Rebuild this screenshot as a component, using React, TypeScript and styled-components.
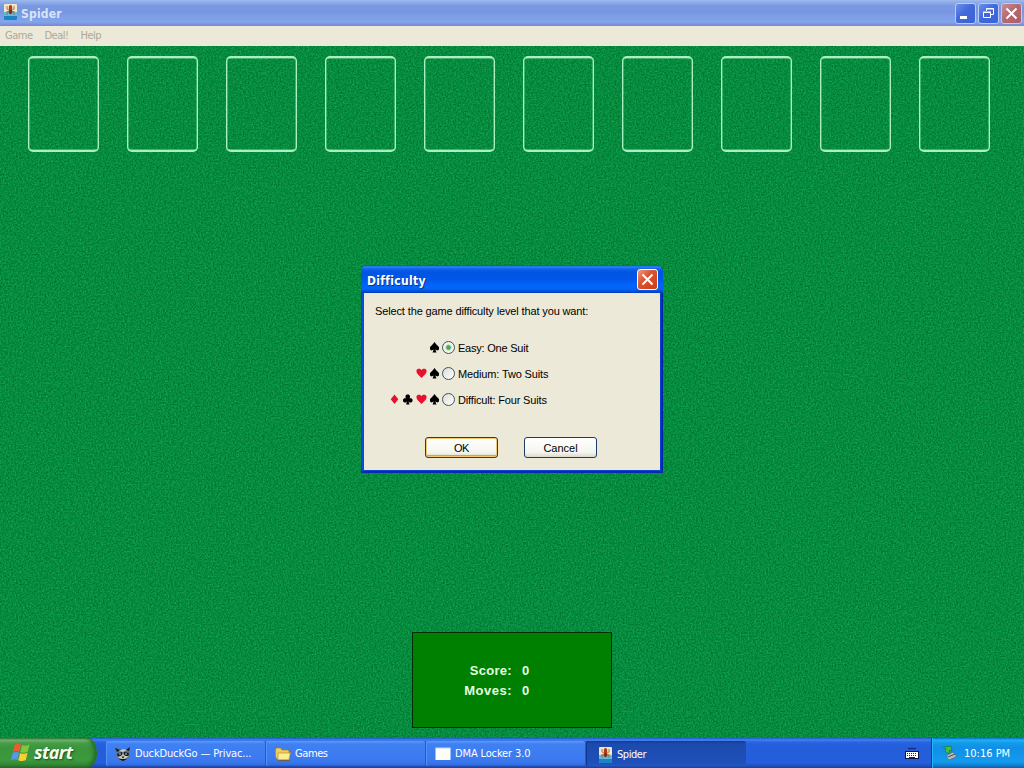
import { FunctionComponent, ReactNode, useState } from 'react';
import styled, { createGlobalStyle, css } from 'styled-components';

const GlobalStyle = createGlobalStyle`
    * {
        box-sizing: border-box;
    }

    body {
        margin: 0;
        overflow: hidden;
        font-family: 'DejaVu Sans Condensed', 'DejaVu Sans', sans-serif;
        font-size: 11px;
    }
`;

const Desktop = styled.div`
    width: 1024px;
    height: 768px;
    display: flex;
    flex-direction: column;
    overflow: hidden;
`;

const TitleBar = styled.header`
    height: 26px;
    flex: none;
    display: flex;
    align-items: center;
    padding: 0 2px 0 2px;
    background: linear-gradient(
        #a0b9ee 0px,
        #8faee9 2px,
        #7b98e1 6px,
        #7997e1 12px,
        #7f9fe8 17px,
        #82a5ec 22px,
        #7b96df 24px,
        #7b86cc 26px
    );

    > svg {
        margin-top: -3px;
    }
`;

const TitleText = styled.h1`
    flex: 1;
    margin: 1px 0 0 3px;
    font-family: 'DejaVu Sans Condensed', 'DejaVu Sans', sans-serif;
    font-size: 12px;
    font-weight: bold;
    letter-spacing: 0.2px;
    color: #d8e4f8;
`;

const WindowButtons = styled.div`
    display: flex;
    gap: 2px;
`;

const WindowButton = styled.button<{ $close?: boolean }>`
    width: 21px;
    height: 21px;
    padding: 0;
    border: 1px solid #b9caf3;
    border-radius: 3px;
    background: ${({ $close }) =>
        $close
            ? 'linear-gradient(135deg, #c88b96, #b56a70 45%, #ac5f69)'
            : 'linear-gradient(135deg, #6c90ec, #4169da 45%, #3c63d8)'};

    svg {
        display: block;
    }
`;

const MenuBar = styled.nav`
    height: 20px;
    flex: none;
    display: flex;
    align-items: center;
    gap: 12px;
    padding: 0 5px 1px;
    background: #ece9d8;
    color: #aca899;
`;

const MenuItem = styled.span`
    letter-spacing: -0.5px;
`;

const Felt = styled.main`
    position: relative;
    flex: 1;
    display: flex;
    flex-direction: column;
    align-items: center;
    justify-content: space-between;
    padding: 10px 0;
    background: #058b42;
`;

const Weave = styled.svg`
    position: absolute;
    inset: 0;
    width: 100%;
    height: 100%;
`;

const Slots = styled.div`
    position: relative;
    align-self: flex-start;
    display: flex;
    gap: 28px;
    padding-left: 28px;
`;

const Slot = styled.div`
    width: 71px;
    height: 96px;
    border: 1.5px solid #a8f0c0;
    border-width: 2px 1.5px;
    border-radius: 5px;
    box-shadow: inset 0 0 0 0.5px #7fd8a0;
`;

const ScoreBox = styled.div`
    position: relative;
    width: 200px;
    height: 96px;
    display: grid;
    grid-template-columns: 99px auto;
    grid-auto-rows: 20px;
    align-content: center;
    column-gap: 10px;
    padding-top: 2px;
    line-height: 20px;
    border: 1px solid #032b03;
    background: #008000;
    font-family: 'Liberation Sans', Arial, sans-serif;
    font-size: 13px;
    font-weight: bold;
    color: #e4ffe0;
`;

const ScoreLabel = styled.span<{ $spacing: number }>`
    text-align: right;
    letter-spacing: ${({ $spacing }) => $spacing}px;
`;

const Dialog = styled.section`
    position: absolute;
    left: 361px;
    top: 219px;
    width: 302px;
    height: 208px;
    display: flex;
    flex-direction: column;
    padding: 0 3px 3px;
    border-radius: 7px 7px 0 0;
    background: linear-gradient(90deg, #0030c0, #0d50e0 1px, #0845d8 3px, #0845d8 299px, #0a38c0 300px, #001c98);
    box-shadow: inset 0 -2px 0 #0a2ca8;
    font-family: 'Liberation Sans', Arial, sans-serif;
    color: #000;
`;

const DialogHeader = styled.header`
    height: 28px;
    flex: none;
    display: flex;
    align-items: center;
    justify-content: space-between;
    margin: 0 -3px;
    padding: 1px 5px 0 6px;
    border-radius: 7px 7px 0 0;
    background: linear-gradient(
        #0a4ed0 0px,
        #2b84f5 2px,
        #0c63ea 4px,
        #0055e3 7px,
        #0056e6 14px,
        #0265fb 20px,
        #0463f6 24px,
        #0048c8 27px,
        #0038b4 28px
    );
    color: #fff;
`;

const DialogTitle = styled.h2`
    margin: 2px 0 0;
    font-family: 'DejaVu Sans Condensed', 'DejaVu Sans', sans-serif;
    font-size: 12px;
    letter-spacing: 0.3px;
    font-variant-ligatures: none;
    text-shadow: 1px 1px #0a3390;
`;

const CloseButton = styled(WindowButton)`
    border-color: #fff;
    background: linear-gradient(135deg, #ee9b80, #dc5533 40%, #cc3c14);
`;

const DialogBody = styled.div`
    flex: 1;
    padding: 11px 11px 0;
    background: #ece9d8;
`;

const Prompt = styled.p`
    margin: 0;
    line-height: 14px;
    white-space: nowrap;
    letter-spacing: -0.13px;
`;

const Levels = styled.div`
    margin-top: 16px;
`;

const Level = styled.label<{ $spacing: number }>`
    height: 26px;
    display: grid;
    grid-template-columns: 67px 13px auto;
    align-items: center;
    white-space: nowrap;
    letter-spacing: ${({ $spacing }) => $spacing}px;
`;

const Suits = styled.span`
    display: flex;
    justify-content: flex-end;
    gap: 2px;
    padding-right: 2px;
`;

const RadioInput = styled.input`
    appearance: none;
    width: 13px;
    height: 13px;
    margin: 0;
    border: 1px solid #35546f;
    border-radius: 50%;
    background: linear-gradient(135deg, #dcdcd7, #fff);

    &:checked {
        background: radial-gradient(circle, #4aa84a 0 1.6px, #9ccf9a 2.4px, #f2f4ee 3.6px);
    }
`;

const LevelName = styled.span`
    padding: 1px 0 0 3px;
`;

const Buttons = styled.div`
    display: flex;
    gap: 26px;
    margin: 25px 0 0 50px;
`;

const PushButton = styled.button<{ $primary?: boolean }>`
    width: 73px;
    height: 21px;
    padding: 1px 0 0;
    border: 1px solid #1c3c6c;
    border-radius: 3px;
    background: linear-gradient(#fff, #f5f5f0 75%, #dcd9cc);
    font-family: inherit;
    font-size: 11px;
    letter-spacing: ${({ $primary }) => ($primary ? -0.4 : 0)}px;
    color: #000;

    ${({ $primary }) =>
        $primary &&
        css`
            box-shadow: inset 0 0 0 1px #f5c86c, inset 0 -2px 0 #e0a03c;
        `}
`;

const TaskBar = styled.footer`
    height: 30px;
    flex: none;
    display: flex;
    background: linear-gradient(
        #2459c8 0px,
        #3f86f0 2px,
        #2865e0 4px,
        #245edb 8px,
        #245edb 25px,
        #1e4fbc 28px,
        #1a419c 30px
    );
    color: #fff;
`;

const StartButton = styled.button`
    width: 97px;
    height: 30px;
    display: flex;
    align-items: center;
    gap: 3px;
    margin-right: 9px;
    padding: 0 0 2px 10px;
    border: 0;
    border-radius: 0 9px 11px 0 / 0 15px 15px 0;
    background: linear-gradient(#307a36 0px, #76b874 2px, #469e48 5px, #3a953c 10px, #3c9a3c 22px, #338633 27px, #24662b 30px);
    box-shadow: inset -4px 0 4px -1px #246826;
    font-family: 'Open Sans', sans-serif;
    font-size: 18px;
    font-weight: bold;
    font-style: italic;
    letter-spacing: -0.6px;
    color: #f6fff0;
    text-shadow: 1px 1px 2px #174c18;
`;

const Task = styled.div<{ $active?: boolean; $spacing: number }>`
    width: 160px;
    height: 25px;
    display: flex;
    align-items: center;
    gap: 4px;
    margin-top: 3px;
    padding: ${({ $active }) => ($active ? '2px 0 0 11px' : '0 0 0 9px')};
    border-radius: 2px;
    white-space: nowrap;
    letter-spacing: ${({ $spacing }) => $spacing}px;
    background: ${({ $active }) =>
        $active
            ? 'linear-gradient(#173b91, #1c4bae 3px, #1e50b8 22px, #2258c4)'
            : 'linear-gradient(#5d9bfa, #3f80f2 3px, #3b79ef 19px, #3672e6 23px, #2a5dd0)'};
    box-shadow: ${({ $active }) => ($active ? 'inset 1px 0 #12368a' : 'inset 1px 0 #5592f7, inset -1px 0 #265bcc')};
`;

const KeyboardTray = styled.div`
    flex: 1;
    display: flex;
    align-items: center;
    justify-content: flex-end;
    padding-right: 12px;
`;

const Tray = styled.div`
    width: 93px;
    display: flex;
    align-items: center;
    gap: 7px;
    padding-left: 11px;
    white-space: nowrap;
    border-left: 1px solid #0b3e9b;
    box-shadow: inset 1px 0 #23b8f8;
    background: linear-gradient(#0d6fc8 0px, #1cb2f4 2px, #149ae8 5px, #118fe6 10px, #139aee 24px, #0f77c8 28px, #0c5da8 30px);
`;

const SpiderIcon: FunctionComponent = () => (
    <svg width="16" height="16" viewBox="0 0 16 16">
        <rect x="2" y="0" width="13" height="16" rx="1" fill="#f0e6c8" />
        <path d="M2 8h13v7q0 1-1 1H3q-1 0-1-1z" fill="#5cbce0" />
        <path d="M2 12h13v3q0 1-1 1H3q-1 0-1-1z" fill="#1a84c4" />
        <path d="M5 2v3l3.500 2L12 5V2M4 8l4.500-1L13 8M5 11V9l3.500-2L12 9v2" fill="none" stroke="#a8683c" strokeWidth=".9" />
        <ellipse cx="8.500" cy="4" rx="1.700" ry="3" fill="#b03a1e" />
        <ellipse cx="8.500" cy="8" rx="1.500" ry="2.200" fill="#7c2a1c" />
    </svg>
);

const SuitIcon: FunctionComponent<{ suit: string }> = ({ suit }) => (
    <svg width="11" height="11" viewBox="0 0 11 11" fill={suit === 'heart' || suit === 'diamond' ? '#e8112d' : '#000'}>
        {suit === 'spade' && <path d="M5.500 0L7 2 10 5v2.500L8.500 8.500 6.300 7.500 7.500 10.500h-4L4.700 7.500 2.500 8.500 1 7.500V5L4 2z" />}
        {suit === 'heart' && <path d="M5.500 10L1.500 6 .5 4V2l1.500-1.300h2L5.500 2 7 .7h2L10.500 2v2l-1 2z" />}
        {suit === 'diamond' && <path d="M4.500.5L8.300 5.300 4.500 10 .7 5.300z" />}
        {suit === 'club' && (
            <path d="M3.700.5h2L7 1.800v1.700L6.500 4.300h1.800l1.200 1.100v1.900L8.400 8.400H6.600L5.500 7.500 6.500 10.500H3L4 7.500 2.800 8.400H1.200L0 7.300V5.400l1.200-1.100H3L2.500 3.500V1.800z" />
        )}
    </svg>
);

const CrossIcon: FunctionComponent = () => (
    <svg width="19" height="19" viewBox="0 0 19 19">
        <path d="M4.500 4.500l10 10M14.500 4.500l-10 10" stroke="#fff" strokeWidth="2" />
    </svg>
);

const WindowsLogo: FunctionComponent = () => (
    <svg width="21" height="20" viewBox="0 0 20 20">
        <path d="M4 3q3-2.500 6.500-.5L8.800 9.800q-3-1.800-6.300.2z" fill="#ee5b2e" />
        <path d="M11.500 3q3 1.700 7.500-.5l-1.800 7.300q-3.700 2-7.400.2z" fill="#83c63e" />
        <path d="M2.200 11q3-2 6.300-.2L6.900 18q-3-1.600-6.500.3z" fill="#5a94ef" />
        <path d="M9.600 11q3.700 1.800 7.400-.2L15.300 18q-3.700 2-7.500.2z" fill="#f9d02f" />
    </svg>
);

const RaccoonIcon: FunctionComponent = () => (
    <svg width="16" height="16" viewBox="0 0 16 16">
        <path d="M0 2l5 1h6l4-2v3l-1 3 1 3-3 3-4 2-4-1-3-4 1-3z" fill="#66717a" />
        <path d="M0 2l5 2-3 2zM15 1l-4 3 3 1zM2 8l5-2v3l-4 2zM14 7L9 6v3l4 2z" fill="#151c22" />
        <path d="M4 5l4 1 4-2-4-1zM2 11l4-1 2-2 2 2 4 0-3 2-3 2-3-2z" fill="#c8ceca" />
        <path d="M4 8h2M10 8h2" stroke="#fff" strokeWidth=".8" />
        <path d="M6.500 10.500h3L8 12.500zM4 13l4 2 4-2" fill="#111" />
    </svg>
);

const FolderIcon: FunctionComponent = () => (
    <svg width="16" height="16" viewBox="0 0 16 16">
        <path d="M.5 3.500l1-1.500h4L7 4h6l1 1v9H3l-2.500-3z" fill="#f0cc5c" stroke="#a77d1c" strokeWidth=".6" />
        <path d="M3 7h11.500L15.500 6l-1.500 8H3z" fill="#ffec94" stroke="#a8842c" strokeWidth=".6" />
        <path d="M3.500 14.300h11" stroke="#6c5420" strokeWidth=".8" />
    </svg>
);

const AppIcon: FunctionComponent = () => (
    <svg width="16" height="16" viewBox="0 0 16 16">
        <rect x=".5" y="2" width="15" height="12" fill="#fdfdf8" />
        <path d="M.5 2h15" stroke="#bfd8fa" />
    </svg>
);

const KeyboardIcon: FunctionComponent = () => (
    <svg width="14" height="16" viewBox="0 0 14 16">
        <path d="M3 3l2 1 2-1 2 1 2-1" fill="none" stroke="#0c1c4e" />
        <rect x=".5" y="6.500" width="13" height="7" fill="#fff" stroke="#0b1740" />
        <path d="M2 8.500h10M2 10.500h10" stroke="#17203c" strokeDasharray="1 1" />
        <path d="M4 12.500h6" stroke="#17203c" />
    </svg>
);

const EjectIcon: FunctionComponent = () => (
    <svg width="14" height="16" viewBox="0 0 14 16">
        <path d="M4 10l6-3 3 3v2l-7 3-2-2z" fill="#b4bcb8" stroke="#59636a" strokeWidth=".7" />
        <path d="M5 12l7-3" stroke="#46505a" />
        <path d="M.5 2L8 1l1 5-2-1-1.500 4L2 6l1-2z" fill="#45bd3f" stroke="#187425" strokeWidth=".6" />
    </svg>
);

const levels = [
    { name: 'Easy: One Suit', suits: ['spade'], spacing: -0.22 },
    { name: 'Medium: Two Suits', suits: ['heart', 'spade'], spacing: -0.14 },
    { name: 'Difficult: Four Suits', suits: ['diamond', 'club', 'heart', 'spade'], spacing: -0.16 },
];

const tasks: { name: string; icon: ReactNode; spacing: number; active?: boolean }[] = [
    { name: 'DuckDuckGo — Privac...', icon: <RaccoonIcon />, spacing: -0.14 },
    { name: 'Games', icon: <FolderIcon />, spacing: -0.4 },
    { name: 'DMA Locker 3.0', icon: <AppIcon />, spacing: -0.14 },
    { name: 'Spider', icon: <SpiderIcon />, spacing: -0.45, active: true },
];

const DifficultyDialog: FunctionComponent = () => {
    const [selected, setSelected] = useState(0);

    return (
        <Dialog>
            <DialogHeader>
                <DialogTitle>Difficulty</DialogTitle>
                <CloseButton aria-label="Close">
                    <CrossIcon />
                </CloseButton>
            </DialogHeader>
            <DialogBody>
                <Prompt>Select the game difficulty level that you want:</Prompt>
                <Levels>
                    {levels.map(({ name, suits, spacing }, i) => (
                        <Level key={name} $spacing={spacing}>
                            <Suits>
                                {suits.map((suit) => (
                                    <SuitIcon key={suit} suit={suit} />
                                ))}
                            </Suits>
                            <RadioInput type="radio" name="level" checked={selected === i} onChange={() => setSelected(i)} />
                            <LevelName>{name}</LevelName>
                        </Level>
                    ))}
                </Levels>
                <Buttons>
                    <PushButton $primary>OK</PushButton>
                    <PushButton>Cancel</PushButton>
                </Buttons>
            </DialogBody>
        </Dialog>
    );
};

const App: FunctionComponent = () => (
    <>
        <GlobalStyle />
        <Desktop>
            <TitleBar>
                <SpiderIcon />
                <TitleText>Spider</TitleText>
                <WindowButtons>
                    <WindowButton aria-label="Minimize">
                        <svg width="19" height="19" viewBox="0 0 19 19">
                            <path d="M4 13.500h7" stroke="#fff" strokeWidth="3" />
                        </svg>
                    </WindowButton>
                    <WindowButton aria-label="Restore">
                        <svg width="19" height="19" viewBox="0 0 19 19" fill="none" stroke="#fff">
                            <path d="M7.500 7V4.500h7v6H12M7 5h8" />
                            <path d="M4.500 8.500h7v5h-7zM4 8h8" />
                        </svg>
                    </WindowButton>
                    <WindowButton $close aria-label="Close">
                        <CrossIcon />
                    </WindowButton>
                </WindowButtons>
            </TitleBar>
            <MenuBar>
                <MenuItem>Game</MenuItem>
                <MenuItem>Deal!</MenuItem>
                <MenuItem>Help</MenuItem>
            </MenuBar>
            <Felt>
                <Weave>
                    <filter id="weave" x="0" y="0" width="100%" height="100%" colorInterpolationFilters="sRGB">
                        <feTurbulence type="fractalNoise" baseFrequency="0.6" numOctaves="2" seed="4" />
                        <feColorMatrix values="0.15 0 0 0 -0.05  0.3 0 0 0 0.395  0.28 0 0 0 0.105  0 0 0 0 1" />
                    </filter>
                    <rect width="100%" height="100%" filter="url(#weave)" />
                </Weave>
                <Slots>
                    {Array.from({ length: 10 }, (_, i) => (
                        <Slot key={i} />
                    ))}
                </Slots>
                <ScoreBox>
                    <ScoreLabel $spacing={0.3}>Score:</ScoreLabel>
                    <span>0</span>
                    <ScoreLabel $spacing={0.5}>Moves:</ScoreLabel>
                    <span>0</span>
                </ScoreBox>
                <DifficultyDialog />
            </Felt>
            <TaskBar>
                <StartButton>
                    <WindowsLogo />
                    start
                </StartButton>
                {tasks.map(({ name, icon, spacing, active }) => (
                    <Task key={name} $active={active} $spacing={spacing}>
                        {icon}
                        {name}
                    </Task>
                ))}
                <KeyboardTray>
                    <KeyboardIcon />
                </KeyboardTray>
                <Tray>
                    <EjectIcon />
                    10:16 PM
                </Tray>
            </TaskBar>
        </Desktop>
    </>
);

export default App;
